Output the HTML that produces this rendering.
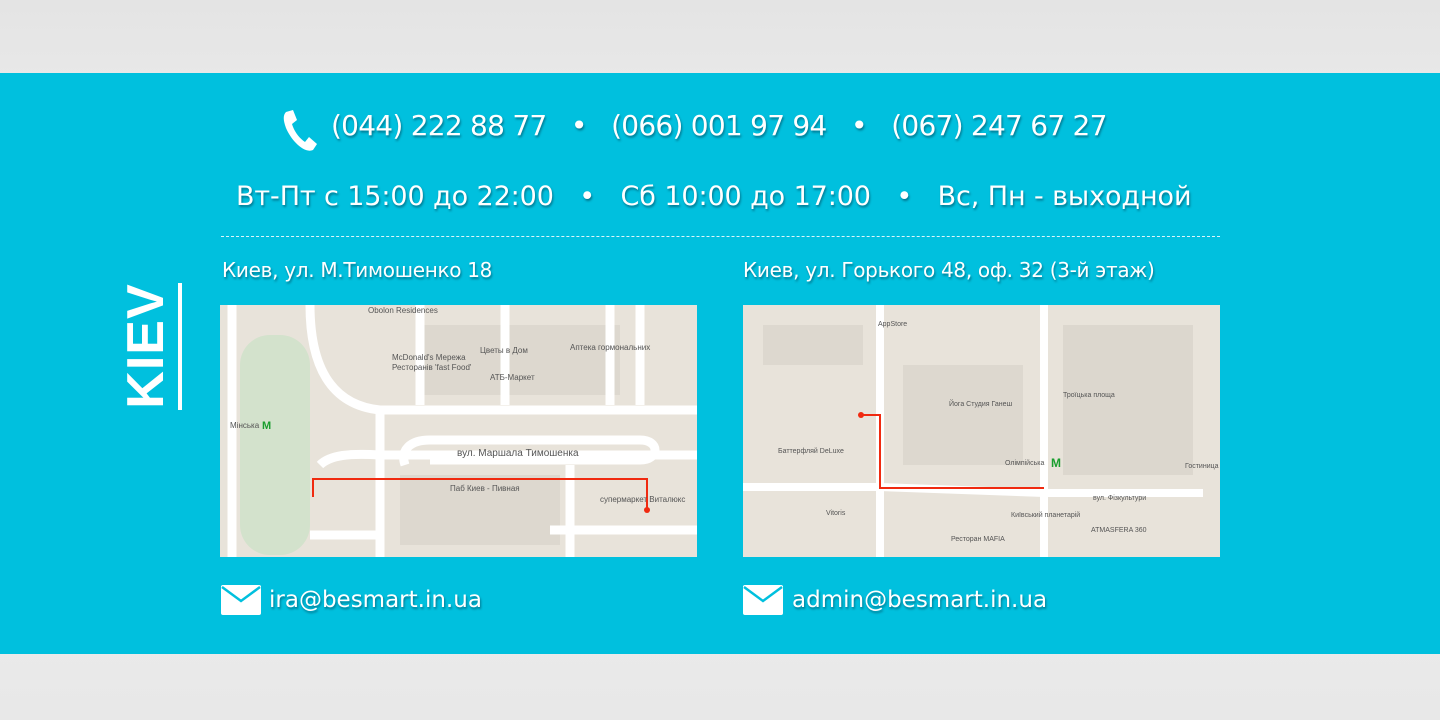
<!DOCTYPE html>
<html><head><meta charset="utf-8"><style>
*{margin:0;padding:0;box-sizing:border-box}
body{width:1440px;height:720px;overflow:hidden;background:linear-gradient(180deg,#e4e4e4,#f2f2f2 40%,#e8e8e8);font-family:"DejaVu Sans","Liberation Sans",sans-serif;position:relative}
.band{position:absolute;left:0;top:73px;width:1440px;height:581px;background:#00c0de}
.t{position:absolute;color:#fff;white-space:nowrap;text-shadow:1px 2px 2px rgba(0,60,80,.55)}
.ph{font-size:28px;top:109px;letter-spacing:-0.75px}
.hr{font-size:27px;top:181px;letter-spacing:-0.1px}
.ad{font-size:20px;top:258px;letter-spacing:-0.3px}
.em{font-size:23px;top:587px}
.dash{position:absolute;left:221px;top:236px;width:999px;border-top:1px dashed rgba(255,255,255,.85)}
.map{position:absolute;top:305px;width:477px;height:252px;background:#e8e3da;overflow:hidden}
.kiev{position:absolute;left:122px;top:283px;width:48px;height:125px}
.kiev span{position:absolute;left:50%;top:50%;transform:translate(-50%,-50%) rotate(-90deg);color:#fff;font:bold 52px "Liberation Sans",sans-serif;letter-spacing:1px}
.kbar{position:absolute;left:178px;top:283px;width:4px;height:127px;background:#fff}
</style></head><body>
<div class="band"></div>
<svg style="position:absolute;left:282px;top:110px" width="36" height="42" viewBox="0 0 36 42"><path d="M4 2 L11 0 L15 10 L10 14 C12 21 17 28 23 32 L27 27 L35 34 L31 40 C22 44 9 30 4 18 C1 10 1 5 4 2Z" fill="#fff"/></svg>
<div class="t ph" style="left:331px">(044) 222 88 77&nbsp;&nbsp;&nbsp;•&nbsp;&nbsp;&nbsp;(066) 001 97 94&nbsp;&nbsp;&nbsp;•&nbsp;&nbsp;&nbsp;(067) 247 67 27</div>
<div class="t hr" style="left:236px">Вт-Пт с 15:00 до 22:00&nbsp;&nbsp;&nbsp;•&nbsp;&nbsp;&nbsp;Сб 10:00 до 17:00&nbsp;&nbsp;&nbsp;•&nbsp;&nbsp;&nbsp;Вс, Пн - выходной</div>
<div class="dash"></div>
<div class="kiev"><span>KIEV</span></div><div class="kbar"></div>
<div class="t ad" style="left:222px">Киев, ул. М.Тимошенко 18</div>
<div class="t ad" style="left:743px">Киев, ул. Горького 48, оф. 32 (3-й этаж)</div>
<div class="map" style="left:220px"><svg width="477" height="252" style="font:8px 'Liberation Sans',sans-serif;fill:#555">
<rect x="20" y="30" width="70" height="220" rx="30" fill="#d3e2cc"/>
<rect x="200" y="20" width="200" height="70" fill="#ddd8cf"/><rect x="180" y="170" width="160" height="70" fill="#ddd8cf"/>
<g stroke="#fff" stroke-width="9" fill="none">
<path d="M12 0 V252"/><path d="M90 0 C90 60 110 100 160 105 H477"/><path d="M160 105 V252"/><path d="M185 160 C180 145 190 135 210 135 H420 C440 135 440 155 420 155 H210"/><path d="M100 160 C110 150 130 148 160 150 H477"/><path d="M90 230 H160"/><path d="M330 225 H477"/><path d="M200 0 V100 M285 0 V100 M390 0 V100 M420 0 V100"/><path d="M350 160 V252"/>
</g>
<path d="M93 192 V174 H427 V205" stroke="#f02a10" stroke-width="2" fill="none"/><circle cx="427" cy="205" r="3" fill="#f02a10"/>
<text x="148" y="8">Obolon Residences</text><text x="172" y="55">McDonald's Мережа</text><text x="172" y="65">Ресторанів 'fast Food'</text><text x="260" y="48">Цветы в Дом</text><text x="350" y="45">Аптека гормональних</text><text x="270" y="75">АТБ-Маркет</text><text x="10" y="123">Мінська</text><text x="237" y="151" style="font-size:10px">вул. Маршала Тимошенка</text><text x="230" y="186">Паб Киев - Пивная</text><text x="380" y="197">супермаркет Виталюкс</text>
<text x="42" y="124" fill="#1a9e2e" style="font-weight:bold;font-size:11px">M</text>
</svg></div>
<div class="map" style="left:743px"><svg width="477" height="252" style="font:7px 'Liberation Sans',sans-serif;fill:#555">
<rect x="20" y="20" width="100" height="40" fill="#ddd8cf"/><rect x="160" y="60" width="120" height="100" fill="#ddd8cf"/><rect x="320" y="20" width="130" height="150" fill="#dcd7ce"/>
<g stroke="#fff" stroke-width="8" fill="none">
<path d="M137 0 V252"/><path d="M301 0 V252"/><path d="M0 182 H137 L301 188 H460"/>
</g>
<path d="M118 110 H137 V183 H301" stroke="#f02a10" stroke-width="2" fill="none"/><circle cx="118" cy="110" r="3" fill="#f02a10"/>
<text x="135" y="21">AppStore</text><text x="206" y="101">Йога Студия Ганеш</text><text x="320" y="92">Троїцька площа</text><text x="35" y="148">Баттерфляй DeLuxe</text><text x="262" y="160">Олімпійська</text><text x="83" y="210">Vitoris</text><text x="268" y="212">Київський планетарій</text><text x="208" y="236">Ресторан MAFIA</text><text x="348" y="227">ATMASFERA 360</text><text x="442" y="163">Гостиница</text><text x="350" y="195">вул. Фізкультури</text>
<text x="308" y="162" fill="#1a9e2e" style="font-weight:bold;font-size:12px">M</text>
</svg></div>
<svg style="position:absolute;left:221px;top:585px" width="40" height="30"><rect width="40" height="30" rx="2" fill="#fff"/><path d="M1 2 L20 16 L39 2" stroke="#00c0de" stroke-width="2.5" fill="none"/></svg>
<svg style="position:absolute;left:743px;top:585px" width="40" height="30"><rect width="40" height="30" rx="2" fill="#fff"/><path d="M1 2 L20 16 L39 2" stroke="#00c0de" stroke-width="2.5" fill="none"/></svg>
<div class="t em" style="left:269px">ira@besmart.in.ua</div>
<div class="t em" style="left:792px">admin@besmart.in.ua</div>
</body></html>
